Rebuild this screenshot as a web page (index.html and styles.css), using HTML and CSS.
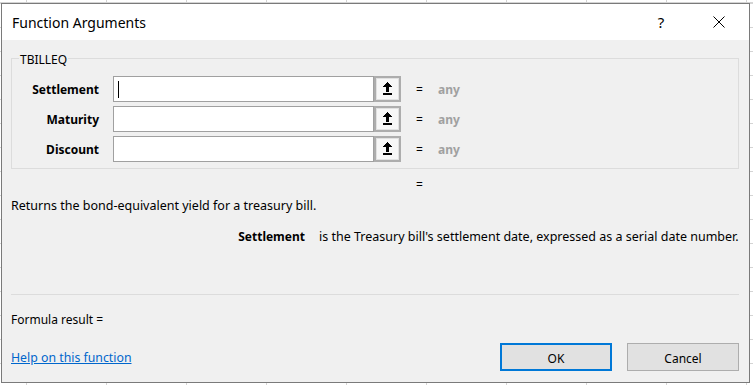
FILE: index.html
```html
<!DOCTYPE html>
<html lang="en">
<head>
    <meta charset="UTF-8">
    <title>Function Arguments</title>
    <link rel="stylesheet" href="styles.css">
</head>
<body>

<div class="dialog">
    <!-- Title bar -->
    <div class="title-bar">
        <span class="title">Function Arguments</span>
        <button class="title-btn help">?</button>
        <button class="title-btn close">
            <svg width="12" height="12" viewBox="0 0 12 12"><path d="M0.5 0.5L11.5 11.5M11.5 0.5L0.5 11.5" stroke="#000" stroke-width="1" fill="none"/></svg>
        </button>
    </div>

    <div class="dialog-body">
        <!-- Arguments group -->
        <div class="group">
            <span class="group-name">TBILLEQ</span>

            <div class="arg-row">
                <label>Settlement</label>
                <div class="field">
                    <div class="arg-input"><span class="caret"></span></div>
                    <button class="ref-btn"><span><svg width="9" height="14" viewBox="0 0 9 14" shape-rendering="crispEdges"><path d="M4 0h1v1h1v1h1v1h1v1h1v1H6v5H3V5H0V4h1V3h1V2h1V1h1z M0 11h9v2H0z"/></svg></span></button>
                </div>
                <span class="eq">=</span>
                <span class="value">any</span>
            </div>

            <div class="arg-row">
                <label>Maturity</label>
                <div class="field">
                    <div class="arg-input"></div>
                    <button class="ref-btn"><span><svg width="9" height="14" viewBox="0 0 9 14" shape-rendering="crispEdges"><path d="M4 0h1v1h1v1h1v1h1v1h1v1H6v5H3V5H0V4h1V3h1V2h1V1h1z M0 11h9v2H0z"/></svg></span></button>
                </div>
                <span class="eq">=</span>
                <span class="value">any</span>
            </div>

            <div class="arg-row">
                <label>Discount</label>
                <div class="field">
                    <div class="arg-input"></div>
                    <button class="ref-btn"><span><svg width="9" height="14" viewBox="0 0 9 14" shape-rendering="crispEdges"><path d="M4 0h1v1h1v1h1v1h1v1h1v1H6v5H3V5H0V4h1V3h1V2h1V1h1z M0 11h9v2H0z"/></svg></span></button>
                </div>
                <span class="eq">=</span>
                <span class="value">any</span>
            </div>
        </div>

        <div class="result-row"><span class="eq">=</span></div>

        <p class="summary">Returns the bond-equivalent yield for a treasury bill.</p>

        <div class="arg-help">
            <span class="arg-name">Settlement</span>
            <span class="arg-text">is the Treasury bill's settlement date, expressed as a serial date number.</span>
        </div>

        <div class="divider"></div>

        <div class="formula-result">Formula result =</div>

        <div class="footer">
            <a href="#" class="help-link">Help on this function</a>
            <div class="actions">
                <button class="btn primary">OK</button>
                <button class="btn">Cancel</button>
            </div>
        </div>
    </div>
</div>

</body>
</html>
```

FILE: styles.css
```css
html, body {
    height: 100%;
}

body {
    margin: 0;
    overflow: hidden;
    font-family: 'Noto Sans', sans-serif;
    font-size: 12px;
    color: #000;
    background-color: #fff;
    background-image:
        repeating-linear-gradient(to right, transparent 0 26px, #d4d4d4 26px 27px, transparent 27px 80px),
        repeating-linear-gradient(to bottom, #d4d4d4 0 1px, transparent 1px 24px);
    background-position: 0 0, 0 3px;
}

.dialog {
    margin: 3px 0 0 1px;
    width: 749px;
    height: 380px;
    box-sizing: border-box;
    border: 1px solid #7a7a7a;
    background: #f0f0f0;
}

.title-bar {
    display: flex;
    align-items: center;
    height: 36px;
    padding-left: 10px;
    background: #fff;
}

.title {
    flex: 1;
    font-size: 14px;
}

.title-btn {
    width: 46px;
    height: 36px;
    padding: 0;
    border: none;
    background: none;
    font-family: inherit;
    font-size: 15px;
    color: #000;
    display: flex;
    align-items: center;
    justify-content: center;
}

.title-btn.help {
    margin-right: 12px;
}

.title-btn.close {
    margin-right: 7px;
}

.dialog-body {
    padding: 18px 10px 0 9px;
}

/* group box */
.group {
    position: relative;
    display: flex;
    flex-direction: column;
    gap: 4px;
    padding: 17px 0 6px 0;
    border: 1px solid #dcdcdc;
}

.group-name {
    position: absolute;
    top: -7px;
    left: 7px;
    padding: 0 1px;
    line-height: 16px;
    background: #f0f0f0;
}

.arg-row {
    display: flex;
    align-items: center;
    height: 26px;
}

.arg-row label {
    width: 87px;
    margin-right: 14px;
    text-align: right;
    font-weight: bold;
}

.field {
    display: flex;
}

.arg-input {
    display: flex;
    align-items: center;
    width: 261px;
    height: 26px;
    box-sizing: border-box;
    border: 1px solid #a0a0a0;
    background: #fff;
}

.caret {
    width: 1px;
    height: 17px;
    margin-left: 4px;
    background: #000;
}

.ref-btn {
    width: 27px;
    height: 26px;
    box-sizing: border-box;
    padding: 1px;
    border: 2px solid #adadad;
    background: #e1e1e1;
}

.ref-btn span {
    display: flex;
    align-items: center;
    justify-content: center;
    width: 100%;
    height: 100%;
    background: #f7f7f7;
}

.eq {
    width: 22px;
    margin-left: 15px;
}

.value {
    color: #a0a0a0;
    font-weight: bold;
}

.result-row {
    margin-top: 8px;
    height: 16px;
    line-height: 16px;
    padding-left: 390px;
}

.summary {
    margin: 5px 0 0 0;
    font-size: 12.5px;
    line-height: 16px;
}

.arg-help {
    display: flex;
    margin-top: 15px;
    line-height: 16px;
}

.arg-name {
    width: 294px;
    text-align: right;
    font-weight: bold;
}

.arg-text {
    margin-left: 14px;
    font-size: 12.5px;
    white-space: nowrap;
}

.divider {
    margin-top: 49px;
    border-top: 1px solid #dcdcdc;
}

.formula-result {
    margin-top: 17px;
    line-height: 16px;
}

.footer {
    display: flex;
    align-items: center;
    justify-content: space-between;
    margin-top: 15px;
}

.help-link {
    color: #0066cc;
    font-size: 12.3px;
    text-decoration: underline;
}

.actions {
    display: flex;
    gap: 15px;
}

.btn {
    width: 112px;
    height: 28px;
    box-sizing: border-box;
    padding: 2px 0 0 0;
    border: 1px solid #adadad;
    background: #e1e1e1;
    font-family: inherit;
    font-size: 12px;
    color: #000;
}

.btn.primary {
    border: 2px solid #0078d7;
}
```
